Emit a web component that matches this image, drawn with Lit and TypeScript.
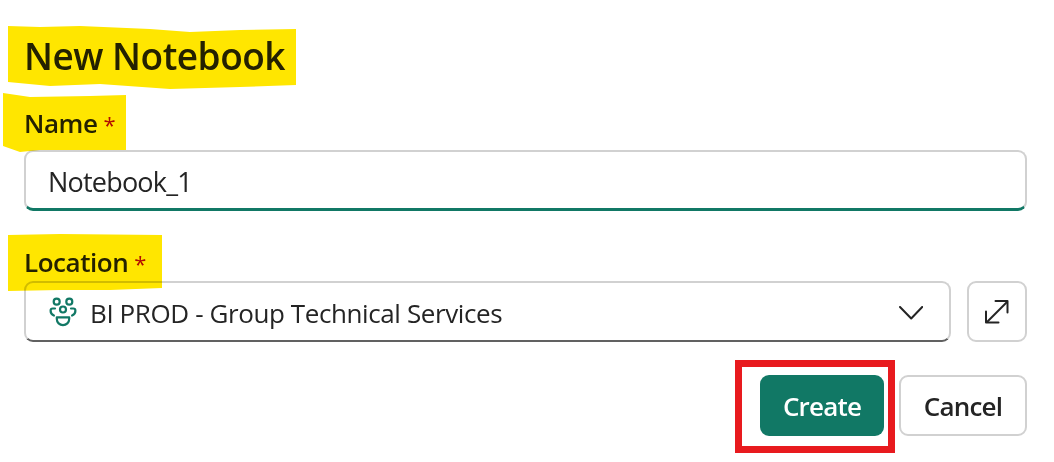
import { LitElement, html, css, svg } from "lit";
import { customElement } from "lit/decorators.js";

@customElement("app-root")
export class AppRoot extends LitElement {
  static styles = css`
    :host { display: block; width: 1054px; height: 462px; background: #fff; overflow: hidden; }
    .page {
      position: relative; box-sizing: border-box; width: 1054px; height: 462px;
      padding: 0 27px 0 24px; display: flex; flex-direction: column;
      font-family: "Open Sans", "Noto Sans", sans-serif; color: #242424;
    }
    h1 { margin: 33px 0 0; font-size: 37px; line-height: 46px; font-weight: 600; color: #242424; letter-spacing: -0.5px; }
    label { display: flex; align-items: baseline; gap: 6px; font-size: 26px; line-height: 34px; font-weight: 600; color: #242424; letter-spacing: -0.45px; }
    .name-label { margin-top: 27px; }
    .loc-label { margin-top: 34px; }
    .req { color: #b10e1c; font-weight: 400; font-size: 22px; }
    .input {
      box-sizing: border-box; height: 61px; margin-top: 9px; border: 2px solid #d1d1d1;
      border-bottom: 3px solid #117865; border-radius: 9px; display: flex; align-items: center;
      padding: 2px 0 0 22px; font-size: 27px; letter-spacing: -0.8px;
    }
    .row { display: flex; gap: 16px; margin-top: 1px; }
    .select {
      flex: 1; box-sizing: border-box; height: 61px; border: 2px solid #d1d1d1;
      border-bottom: 2px solid #616161; border-radius: 9px; display: flex; align-items: center;
      padding: 2px 26px 0 23px; font-size: 26px; letter-spacing: -0.4px; gap: 11px;
    }
    .select span { flex: 1; }
    .square {
      box-sizing: border-box; width: 60px; height: 61px; border: 2px solid #d1d1d1; border-radius: 9px;
      display: flex; align-items: center; justify-content: center; background: #fff;
    }
    .actions { display: flex; justify-content: flex-end; gap: 15px; margin-top: 33px; }
    .btn {
      box-sizing: border-box; height: 61px; border-radius: 9px; display: flex; align-items: center;
      justify-content: center; font-size: 26px; font-weight: 600; font-family: inherit; letter-spacing: -0.8px;
    }
    .create { position: relative; width: 124px; background: #117865; color: #fff; }
    .cancel { width: 128px; border: 2px solid #d1d1d1; background: #fff; color: #242424; }
    .annot {
      position: absolute; left: -25px; top: -15px; width: 160px; height: 93px; box-sizing: border-box;
      border: 7px solid #e81a1e;
    }
    .marker { position: absolute; left: 0; top: 0; width: 1054px; height: 462px; mix-blend-mode: multiply; pointer-events: none; }
    svg { display: block; flex: none; }
  `;

  render() {
    return html`<div class="page">
      <h1>New Notebook</h1>
      <label class="name-label">Name <span class="req">*</span></label>
      <div class="input">Notebook_1</div>
      <label class="loc-label">Location <span class="req">*</span></label>
      <div class="row">
        <div class="select">
          <svg width="30" height="32" viewBox="49 298 30 32" fill="none" stroke="#117865" stroke-width="2.2" stroke-linecap="round">
            <circle cx="56.7" cy="302.7" r="3"/>
            <circle cx="69.3" cy="302.7" r="3"/>
            <circle cx="63" cy="310.5" r="3"/>
            <path d="M55 309.5h-2.2a2.2 2.2 0 0 0-2.2 2.2c0 2.2 1 3.8 3.3 4.8"/>
            <path d="M71 309.5h2.2a2.2 2.2 0 0 1 2.2 2.2c0 2.2-1 3.8-3.3 4.8"/>
            <path d="M56.8 318.4h12.4v1.6a6.2 6.2 0 0 1-12.4 0z" stroke-linejoin="round"/>
          </svg>
          <span>BI PROD - Group Technical Services</span>
          <svg width="24" height="14" viewBox="899.5 307 24 14" fill="none" stroke="#242424" stroke-width="2" stroke-linecap="round" stroke-linejoin="round">
            <path d="M900.5 308l11.2 11.5 11-11.5"/>
          </svg>
        </div>
        <div class="square">
          <svg width="25" height="25" viewBox="985 300 25 25" fill="none" stroke="#242424" stroke-width="2" stroke-linecap="round" stroke-linejoin="round">
            <path d="M995.5 302h12v11.5"/>
            <path d="M986 312.5V323.5h12.5"/>
            <path d="M987.5 322.5l19.5-19.5"/>
          </svg>
        </div>
      </div>
      <div class="actions">
        <div class="btn create">Create<div class="annot"></div></div>
        <div class="btn cancel">Cancel</div>
      </div>
      ${svg`<svg class="marker" viewBox="0 0 1054 462">
        <g fill="#ffe600">
          <path d="M8 26L40 27L80 26L150 29L190 32L240 30L296 29L296 85L240 87L170 89L100 84L50 86L8 82Z"/>
          <path d="M3 93L30 97L90 96L126 95L126 150L80 150L40 150L20 152L3 146Z"/>
          <path d="M8 235L60 234L162 235L162 288L110 290L60 290L8 291Z"/>
        </g>
      </svg>`}
    </div>`;
  }
}
